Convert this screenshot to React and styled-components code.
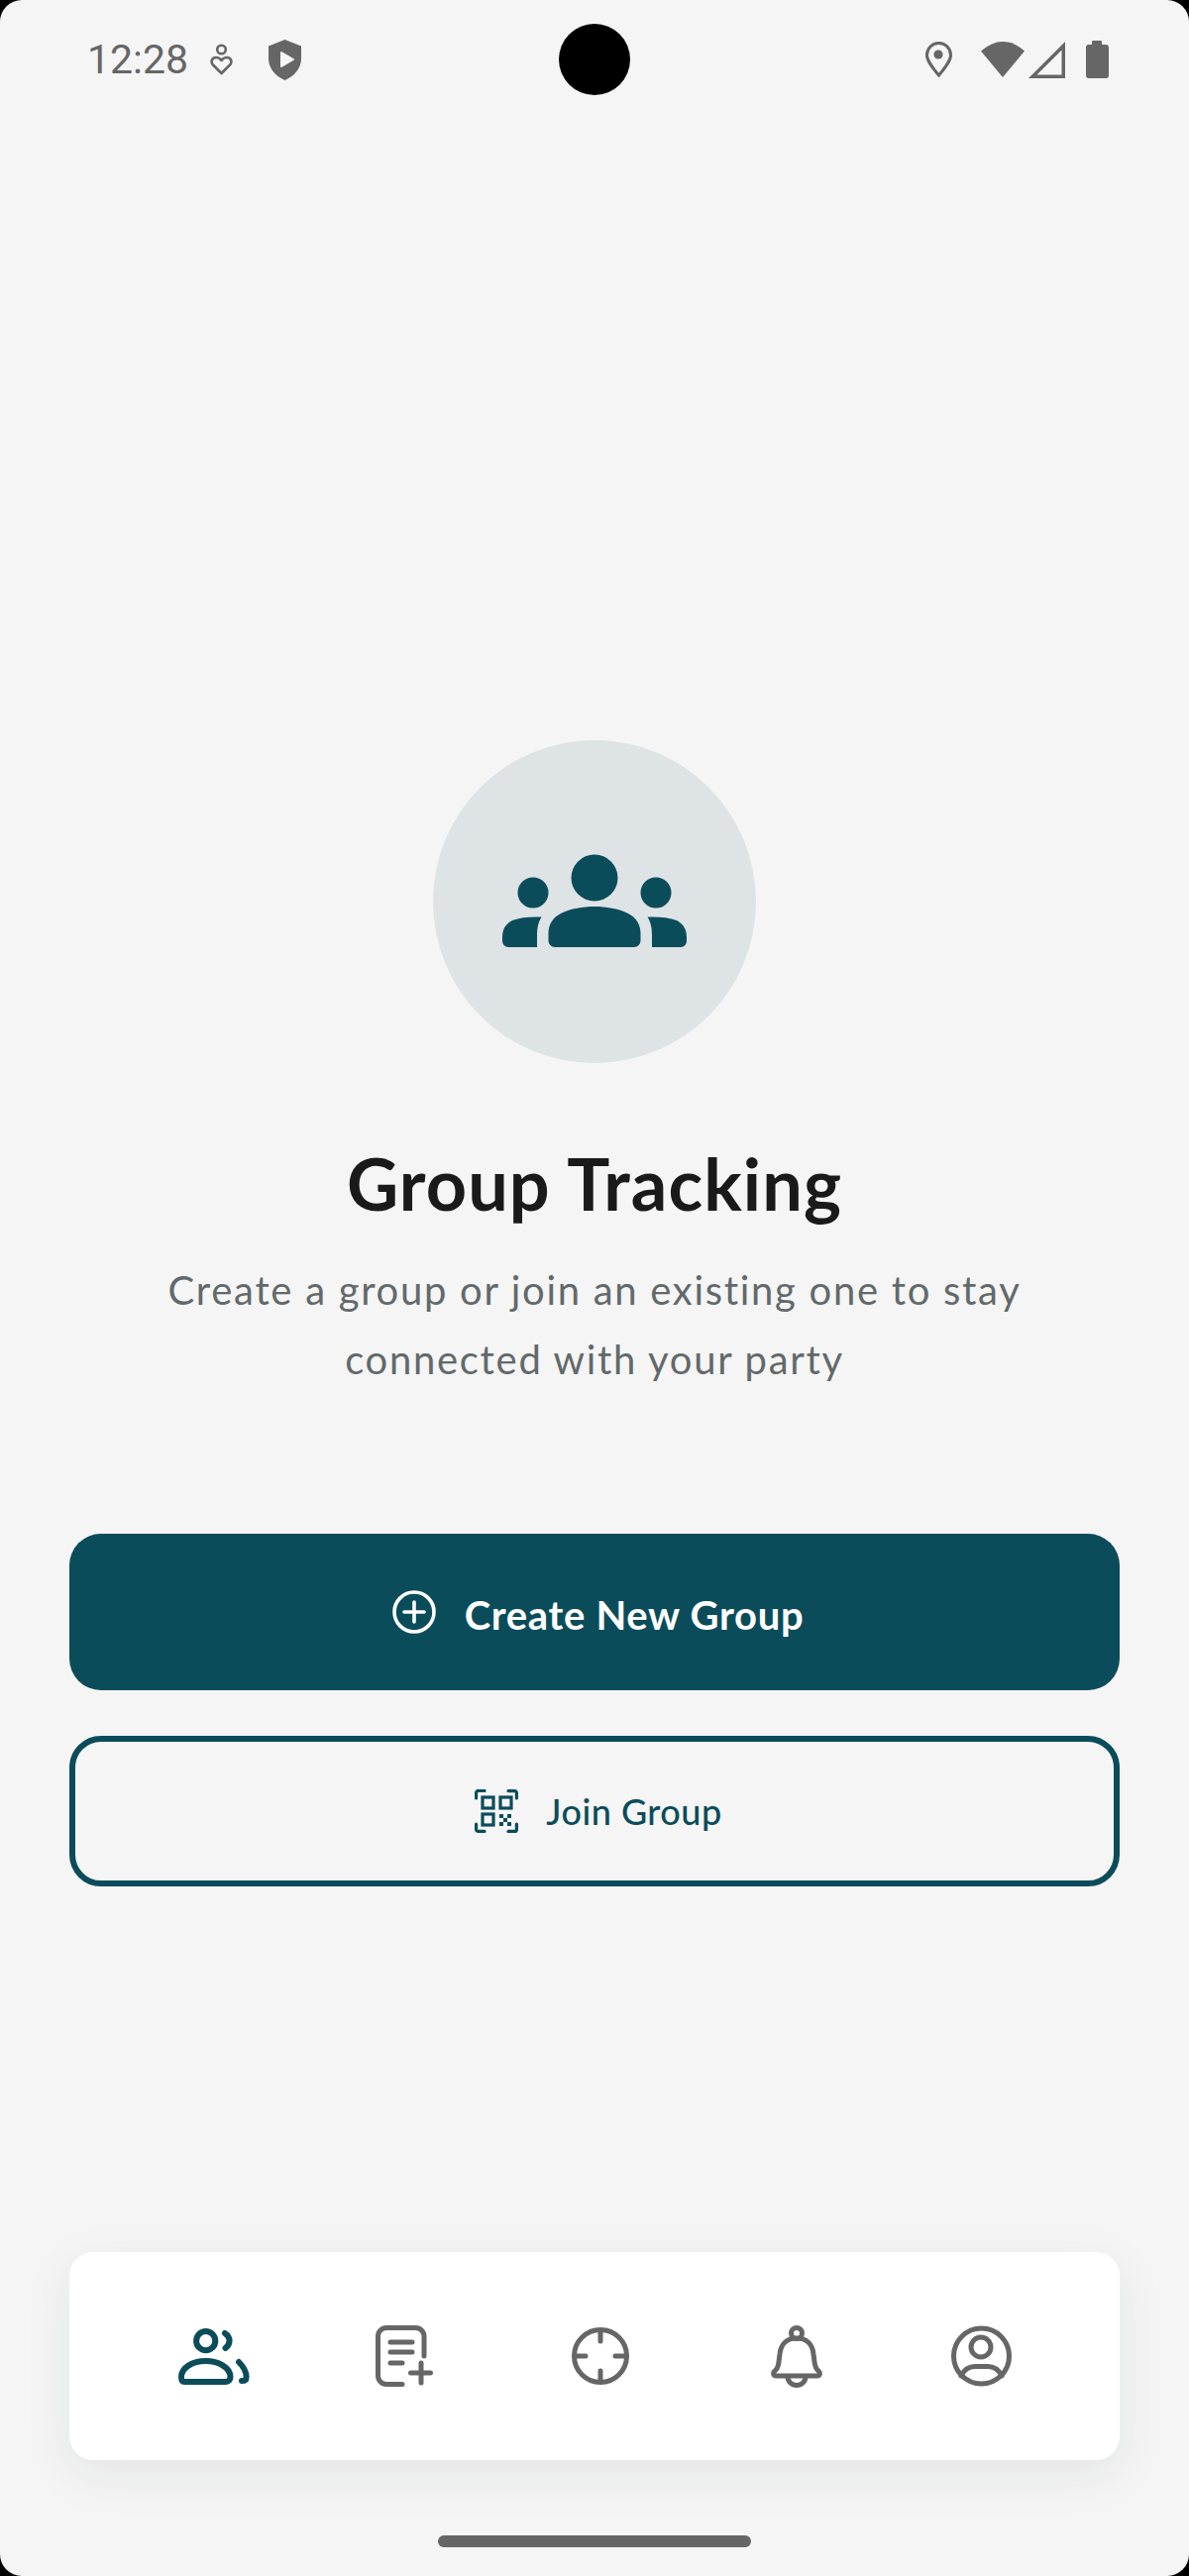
import React from "react";
import styled, { createGlobalStyle } from "styled-components";

const TEAL = "#0b4c5a";
const GREY = "#666666";

const GlobalStyle = createGlobalStyle`
  html, body {
    margin: 0;
    padding: 0;
    background: #000;
  }
  * {
    box-sizing: border-box;
  }
`;

const Screen = styled.div`
  position: relative;
  display: flex;
  flex-direction: column;
  width: 1200px;
  height: 2600px;
  padding-bottom: 29px;
  border-radius: 22px;
  overflow: hidden;
  background: #f5f5f5;
  font-family: "Lato", "Noto Sans", sans-serif;
`;

const StatusBar = styled.header`
  display: flex;
  align-items: center;
  justify-content: space-between;
  height: 120px;
  padding: 0 81px 0 88px;
  color: ${GREY};
`;

const StatusLeft = styled.div`
  display: flex;
  align-items: center;
`;

const StatusRight = styled.div`
  display: flex;
  align-items: center;
`;

const Time = styled.span`
  width: 102px;
  margin-right: 22px;
  font-family: "Roboto", sans-serif;
  font-size: 41px;
  font-weight: 400;
  line-height: 48px;
  white-space: nowrap;
`;

const Glyph = styled.svg`
  display: block;
  flex: none;
  margin-left: ${(p) => p.$before || 0}px;
`;

const Camera = styled.div`
  position: absolute;
  top: 24px;
  left: 564px;
  width: 72px;
  height: 72px;
  border-radius: 50%;
  background: #000;
`;

const Hero = styled.main`
  display: flex;
  flex-direction: column;
  align-items: center;
  padding: 0 70px;
`;

const Avatar = styled.div`
  display: flex;
  align-items: center;
  justify-content: center;
  width: 326px;
  height: 326px;
  margin-top: 627px;
  padding-bottom: 2px;
  border-radius: 50%;
  background: #dee3e5;
`;

const Title = styled.h1`
  margin: 78px 0 0;
  color: #1a1a1a;
  font-size: 72px;
  font-weight: 700;
  letter-spacing: 1.1px;
  line-height: 86px;
  white-space: nowrap;
`;

const Subtitle = styled.p`
  margin: 30px 0 0;
  color: #62696b;
  font-size: 40px;
  font-weight: 400;
  letter-spacing: 1.7px;
  line-height: 70px;
  text-align: center;
`;

const Actions = styled.div`
  display: flex;
  flex-direction: column;
  gap: 46px;
  width: 100%;
  margin-top: 141px;
`;

const PrimaryButton = styled.button`
  display: flex;
  align-items: center;
  justify-content: center;
  gap: 29px;
  width: 100%;
  height: 158px;
  padding: 0 0 0 7px;
  border: 0;
  border-radius: 32px;
  background: ${TEAL};
  color: #fff;
  font-family: inherit;
  font-size: 40px;
  font-weight: 700;
  letter-spacing: 0.7px;
`;

const SecondaryButton = styled.button`
  display: flex;
  align-items: center;
  justify-content: center;
  gap: 28px;
  width: 100%;
  height: 152px;
  padding: 0 0 0 8px;
  border: 6px solid ${TEAL};
  border-radius: 32px;
  background: transparent;
  color: ${TEAL};
  font-family: inherit;
  font-size: 36px;
  font-weight: 500;
  letter-spacing: 0.5px;
`;

const ButtonLabel = styled.span`
  padding-top: ${(p) => p.$drop || 0}px;
`;

const BottomNav = styled.nav`
  display: grid;
  grid-template-columns: 192px 192px 204px 192px 181px;
  align-items: center;
  justify-items: center;
  height: 210px;
  margin: auto 70px 0;
  padding-left: 50px;
  border-radius: 24px;
  background: #fff;
  box-shadow: 0 14px 50px rgba(20, 40, 50, 0.08);
`;

const HomeBar = styled.div`
  flex: none;
  width: 316px;
  height: 12px;
  margin: 76px auto 0;
  border-radius: 6px;
  background: ${GREY};
`;

const HeartPersonIcon = (props) => (
  <Glyph {...props} width="23" height="32" viewBox="0 0 23 32" fill="none" stroke={GREY} strokeWidth="2.6">
    <circle cx="11.5" cy="6" r="4.3" />
    <path d="M11.5 30 L2.5 21 C0.5 18 2 14 6 14 C8.5 14 10.5 15.5 11.5 17 C12.5 15.5 14.5 14 17 14 C21 14 22.5 18 20.5 21 Z" strokeLinejoin="round" />
  </Glyph>
);

const ShieldIcon = (props) => (
  <Glyph {...props} width="33" height="41" viewBox="0 0 33 41">
    <path d="M16.5 0 L33 6.5 V19 C33 29 26 37 16.5 41 C7 37 0 29 0 19 V6.5 Z" fill={GREY} />
    <path d="M13 13 L25 20 L13 27 Z" fill="#f5f5f5" stroke="#f5f5f5" strokeWidth="2" strokeLinejoin="round" />
  </Glyph>
);

const PinIcon = (props) => (
  <Glyph {...props} width="27" height="36" viewBox="0 0 27 36">
    <path d="M13.5 34 C6 25 1.5 19 1.5 13.5 a12 12 0 0 1 24 0 C25.5 19 21 25 13.5 34 Z" fill="none" stroke={GREY} strokeWidth="3" />
    <circle cx="13" cy="13" r="4.6" fill={GREY} />
  </Glyph>
);

const WifiIcon = (props) => (
  <Glyph {...props} width="44" height="36" viewBox="0 0 44 36">
    <path d="M0 9.5 Q22 -9.5 44 9.5 L22 36 Z" fill={GREY} />
  </Glyph>
);

const SignalIcon = (props) => (
  <Glyph {...props} width="37" height="37" viewBox="0 0 37 37">
    <path d="M37 0 V37 H0 Z M33.5 8.5 L8.5 33.5 H33.5 Z" fill={GREY} fillRule="evenodd" />
  </Glyph>
);

const BatteryIcon = (props) => (
  <Glyph {...props} width="23" height="38" viewBox="0 0 23 38">
    <rect x="6" y="0" width="10" height="6" rx="1" fill={GREY} />
    <rect x="0" y="4" width="23" height="34" rx="3" fill={GREY} />
  </Glyph>
);

const GroupsIcon = () => (
  <Glyph width="186" height="94" viewBox="0 0 186 94" fill={TEAL}>
    <circle cx="93" cy="24" r="23.5" />
    <circle cx="31" cy="39" r="15.5" />
    <circle cx="155" cy="39" r="15.5" />
    <path d="M53 94 a6.5 6.5 0 0 1 -6.5 -6.5 V80 C46.5 71 51 64 59 60 C69 55 81 53 93 53 C105 53 117 55 127 60 C135 64 139.5 71 139.5 80 V87.5 a6.5 6.5 0 0 1 -6.5 6.5 Z" />
    <path d="M6 94 a6 6 0 0 1 -6 -6 V84 C0 76 3 71 10 67 C18 64 28 63 39.5 63.5 C36 69 35 75 35 82 V94 Z" />
    <path d="M180 94 a6 6 0 0 0 6 -6 V84 C186 76 183 71 176 67 C168 64 158 63 146.5 63.5 C150 69 151 75 151 82 V94 Z" />
  </Glyph>
);

const PlusCircleIcon = () => (
  <Glyph width="44" height="44" viewBox="0 0 44 44" fill="none" stroke="#fff" strokeWidth="3.6" strokeLinecap="round">
    <circle cx="22" cy="22" r="20" />
    <path d="M22 12 V32 M12 22 H32" />
  </Glyph>
);

const QrIcon = () => (
  <Glyph width="44" height="44" viewBox="0 0 44 44" fill="none" stroke={TEAL} strokeWidth="3.2">
    <path d="M1.6 9 V3.5 a2 2 0 0 1 2 -2 H10" strokeLinecap="round" />
    <path d="M34 1.6 H40.4 a2 2 0 0 1 2 2 V9" strokeLinecap="round" />
    <path d="M1.6 35 V40.4 a2 2 0 0 0 2 2 H10" strokeLinecap="round" />
    <path d="M34 42.4 H40.4 a2 2 0 0 0 2 -2 V35" strokeLinecap="round" />
    <rect x="8" y="8" width="11" height="11" />
    <rect x="26" y="8" width="11" height="11" />
    <rect x="8" y="25" width="11" height="11" />
    <path d="M25 25h4v4h-4z M33 25h4v4h-4z M29 29h4v4h-4z M25 33h4v4h-4z M33 33h4v4h-4z" fill={TEAL} stroke="none" />
  </Glyph>
);

const UsersIcon = () => (
  <Glyph width="72" height="57" viewBox="0 0 72 57" fill="none" stroke={TEAL} strokeWidth="6" strokeLinecap="round" strokeLinejoin="round">
    <circle cx="27.7" cy="12.7" r="9.6" />
    <path d="M6 54 C3 54 3 51 3 49 C3 40 14 33 27.7 33 C41 33 52.5 40 52.5 49 C52.5 52 51 54 48 54 Z" />
    <path d="M47 5 C53 9 53 16 47.5 20" />
    <path d="M61 34 C66 39 69 45 68.5 50 C68.5 52 67 53 64 53" />
  </Glyph>
);

const NoteIcon = () => (
  <Glyph width="58" height="62" viewBox="0 0 58 62" fill="none" stroke={GREY} strokeWidth="5" strokeLinecap="round">
    <path d="M27 59.5 H11 a8.5 8.5 0 0 1 -8.5 -8.5 V11 a8.5 8.5 0 0 1 8.5 -8.5 H40.5 a8.5 8.5 0 0 1 8.5 8.5 V31" />
    <path d="M15 17 H37 M15 27 H37 M15 38 H27" />
    <path d="M46 38 V58 M35.5 48 H55.5" />
  </Glyph>
);

const TargetIcon = () => (
  <Glyph width="58" height="58" viewBox="0 0 58 58" fill="none" stroke={GREY} strokeWidth="5" strokeLinecap="round">
    <circle cx="29" cy="29" r="26.5" />
    <path d="M29 3 V14 M29 44 V55 M3 29 H14 M44 29 H55" />
  </Glyph>
);

const BellIcon = () => (
  <Glyph width="52" height="63" viewBox="0 0 52 63" fill="none" stroke={GREY} strokeWidth="5" strokeLinejoin="round">
    <circle cx="26" cy="8" r="5.5" />
    <path d="M5.5 51 C2 51 2 47.5 4 46 C6.5 44 7.5 41 8 37 L9 29 C10 19 16 13 26 13 C36 13 42 19 43 29 L44 37 C44.5 41 45.5 44 48 46 C50 47.5 50 51 46.5 51 Z" />
    <path d="M17 52 a9 8.5 0 0 0 18 0" />
  </Glyph>
);

const ProfileIcon = () => (
  <Glyph width="61" height="62" viewBox="0 0 61 62" fill="none" stroke={GREY} strokeWidth="5" strokeLinecap="round">
    <circle cx="30.5" cy="31" r="28" />
    <circle cx="30" cy="22" r="10" />
    <path d="M10 51 C13 45 18 41.5 24 41.5 H37 C43 41.5 48 45 51 51" />
  </Glyph>
);

const App = () => {
  return (
    <>
      <GlobalStyle />
      <Screen>
        <StatusBar>
          <StatusLeft>
            <Time>12:28</Time>
            <HeartPersonIcon />
            <ShieldIcon $before={36} />
          </StatusLeft>
          <StatusRight>
            <PinIcon />
            <WifiIcon $before={29} />
            <SignalIcon $before={4} />
            <BatteryIcon $before={21} />
          </StatusRight>
        </StatusBar>
        <Camera />

        <Hero>
          <Avatar>
            <GroupsIcon />
          </Avatar>
          <Title>Group Tracking</Title>
          <Subtitle>
            Create a group or join an existing one to stay
            <br />
            connected with your party
          </Subtitle>
          <Actions>
            <PrimaryButton>
              <PlusCircleIcon />
              <ButtonLabel $drop={6}>Create New Group</ButtonLabel>
            </PrimaryButton>
            <SecondaryButton>
              <QrIcon />
              <ButtonLabel>Join Group</ButtonLabel>
            </SecondaryButton>
          </Actions>
        </Hero>

        <BottomNav>
          <UsersIcon />
          <NoteIcon />
          <TargetIcon />
          <BellIcon />
          <ProfileIcon />
        </BottomNav>
        <HomeBar />
      </Screen>
    </>
  );
};

export default App;
